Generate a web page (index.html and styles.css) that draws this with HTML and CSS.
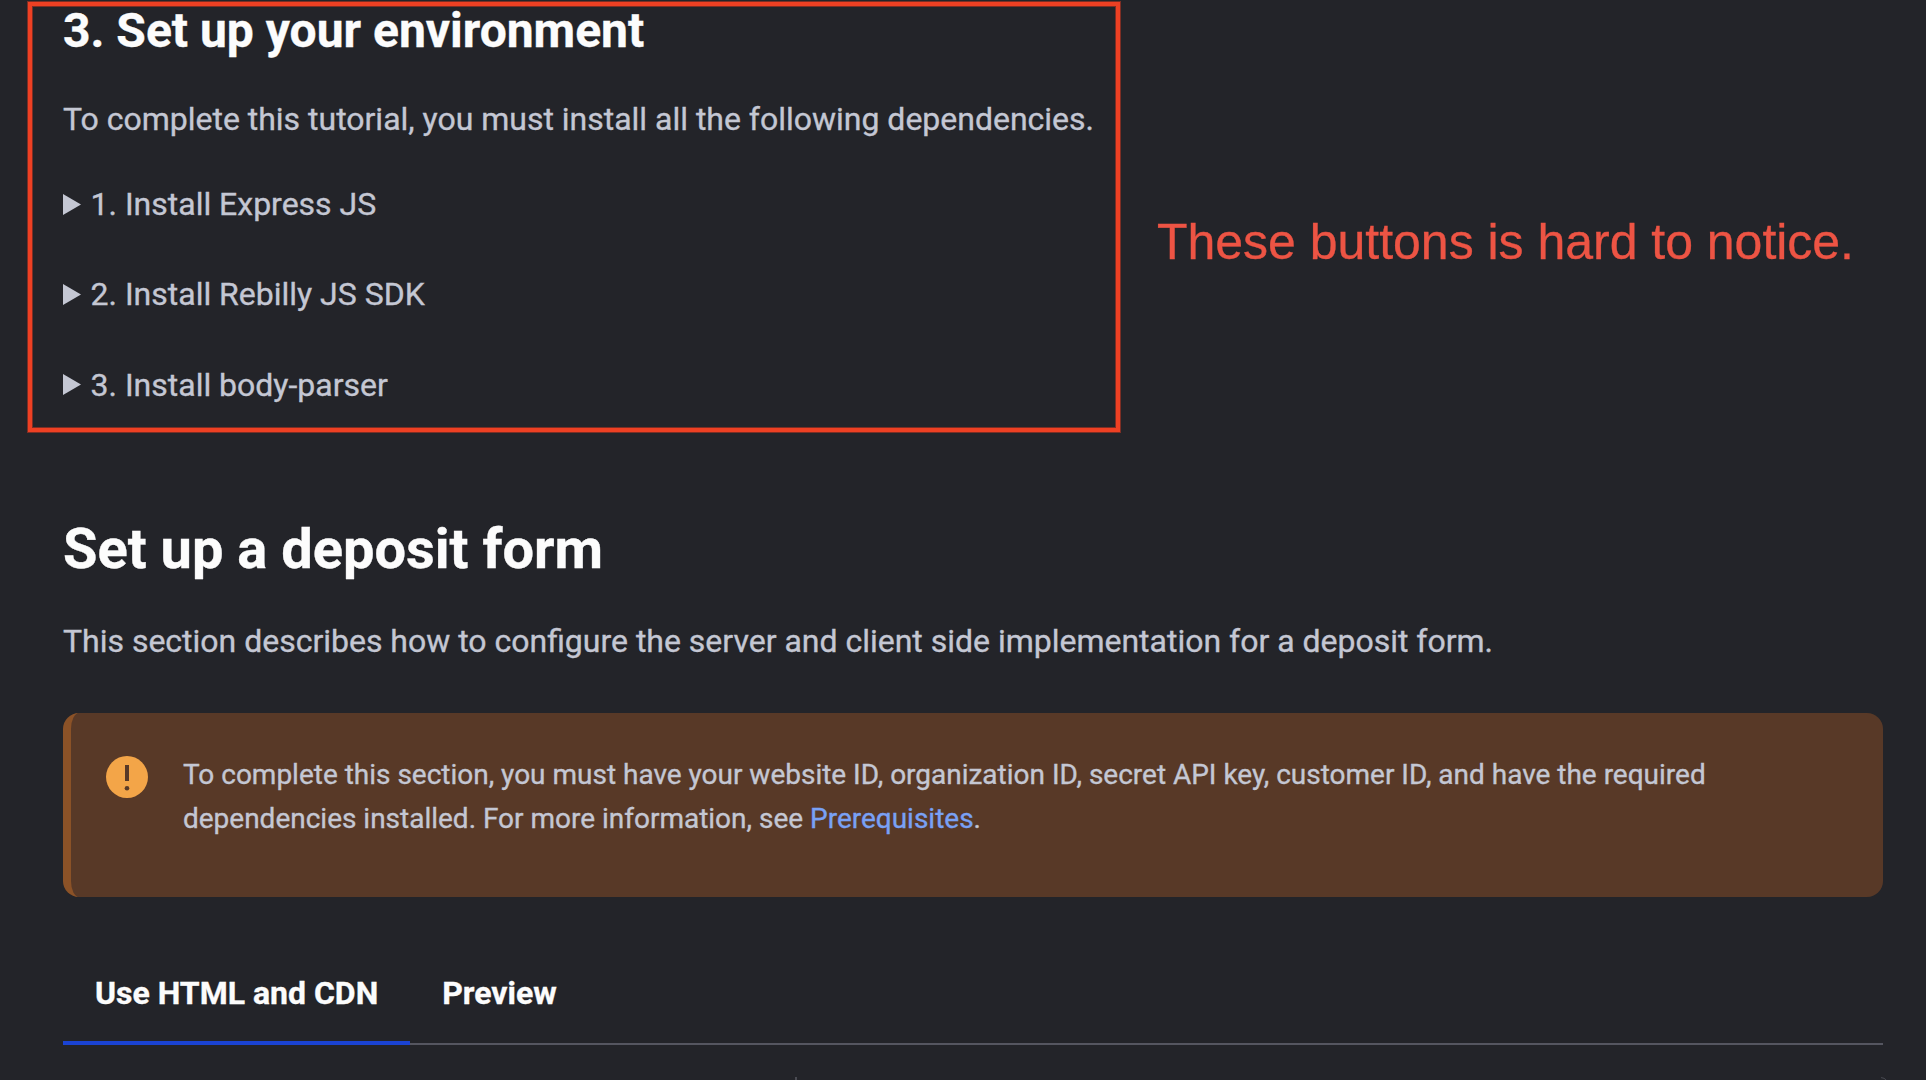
FILE: index.html
```html
<!DOCTYPE html>
<html lang="en">
<head>
<meta charset="utf-8">
<title>Set up a deposit form</title>
<link rel="stylesheet" href="styles.css">
</head>
<body>
<main class="page">
  <section class="environment">
    <h3 class="step-title"><span>3. Set up your environment</span></h3>
    <p class="text"><span>To complete this tutorial, you must install all the following dependencies.</span></p>
    <ul class="steps">
      <li class="step"><svg class="marker" viewBox="0 0 18 21"><path d="M0 0 18 10.5 0 21Z"/></svg><span>1. Install Express JS</span></li>
      <li class="step"><svg class="marker" viewBox="0 0 18 21"><path d="M0 0 18 10.5 0 21Z"/></svg><span>2. Install Rebilly JS SDK</span></li>
      <li class="step"><svg class="marker" viewBox="0 0 18 21"><path d="M0 0 18 10.5 0 21Z"/></svg><span>3. Install body-parser</span></li>
    </ul>
  </section>
  <section class="deposit">
    <h2 class="section-title"><span>Set up a deposit form</span></h2>
    <p class="text"><span>This section describes how to configure the server and client side implementation for a deposit form.</span></p>
    <aside class="notice">
      <svg class="notice-icon" viewBox="0 0 42 42"><circle class="disc" cx="21" cy="21" r="21"/><path class="mark" d="M19 9h4v16h-4z"/><circle class="mark" cx="21" cy="32.2" r="2.3"/></svg>
      <p class="notice-text">To complete this section, you must have your website ID, organization ID, secret API key, customer ID, and have the required<br>dependencies installed. For more information, see <a class="link" href="#">Prerequisites</a>.</p>
    </aside>
    <nav class="tabs">
      <a class="tab active" href="#">Use HTML and CDN</a>
      <a class="tab" href="#">Preview</a>
    </nav>
    <div class="panel-top">
      <span class="divider"></span>
      <svg class="corner" viewBox="0 0 6 3"><path d="M0 .6Q3.5 .8 5.2 3"/></svg>
    </div>
  </section>
</main>
<div class="highlight"></div>
<div class="annotation">These buttons is hard to notice.</div>
</body>
</html>
```
FILE: styles.css
```css
* { box-sizing: border-box; }
body {
  margin: 0;
  height: 1080px;
  overflow: hidden;
  position: relative;
  background: #232429;
  color: #c4c7d3;
  font-family: Roboto, sans-serif;
  font-size: 32px;
  letter-spacing: -0.01px;
  font-feature-settings: "liga" 1;
  -webkit-text-stroke: 0.35px currentColor;
}
h2, h3, p, ul { margin: 0; padding: 0; }
a { text-decoration: none; color: inherit; }
.page { padding: 0 43px 0 63px; }
.step-title { height: 61px; line-height: 62px; font-size: 48px; color: #fcfcfc; }
.text { line-height: 48px; }
.environment .text { margin-top: 34px; }
.steps { list-style: none; margin-top: 37px; display: flex; flex-direction: column; gap: 42.4px; }
.step { display: flex; align-items: center; gap: 9.6px; height: 48px; line-height: 48px; }
.marker { width: 18px; height: 21px; fill: #c4c7d3; stroke: none; }
.section-title { margin-top: 105.2px; height: 70px; line-height: 70px; font-size: 56px; color: #fcfcfc; }
.deposit .text { margin-top: 33px; }
.notice {
  display: flex;
  gap: 35px;
  height: 184px;
  margin-top: 48px;
  padding: 43px 35px 0;
  border-left: 8px solid #8b5227;
  border-radius: 16px;
  background: #583927;
}
.notice-icon { width: 42px; height: 42px; }
.disc { fill: #f3a548; }
.mark { fill: #583927; }
.notice-text { font-size: 28px; line-height: 44px; margin-top: -3px; white-space: nowrap; }
.link { color: #79a1f5; }
.tabs { display: flex; margin-top: 48px; height: 100px; border-bottom: 2px solid #555660; }
.tab { height: 100px; padding: 0 32px; line-height: 96px; font-weight: 700; color: #fcfcfc; }
.active { border-bottom: 4px solid #1a43d3; }
.panel-top {
  display: flex;
  justify-content: space-between;
  height: 3px;
  margin: 32px -4px 0 732px;
}
.divider { width: 2px; height: 3px; background: #4a4b52; }
.corner { width: 6px; height: 3px; fill: none; stroke: #4a4b52; }
.highlight {
  position: absolute;
  left: 28px; top: 2px;
  width: 1092px; height: 430px;
  border: 4px solid #ee4023;
  box-shadow: 0 0 0 1px #7d2e24, inset 0 0 0 1px #7d2e24;
}
.annotation {
  position: absolute;
  left: 1157px; top: 212px;
  font: 50px/60px "Liberation Sans", sans-serif;
  letter-spacing: -0.02px;
  color: #ed5444;
  white-space: nowrap;
}
```
